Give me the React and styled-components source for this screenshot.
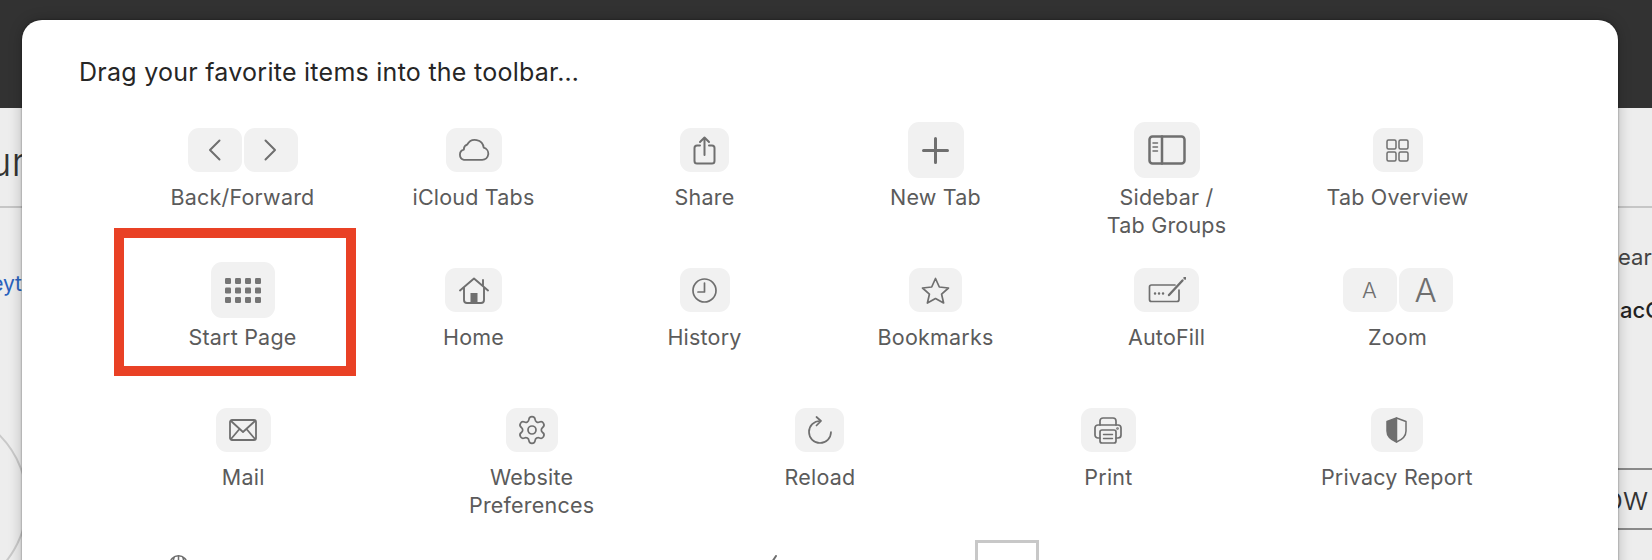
import styled, { createGlobalStyle } from "styled-components";
import { Settings } from "lucide-react";

const GlobalStyle = createGlobalStyle`
  html, body {
    margin: 0;
    padding: 0;
    overflow: hidden;
  }
  body {
    font-family: Inter, "Liberation Sans", sans-serif;
  }
`;

const Screen = styled.div`
  position: relative;
  width: 1652px;
  height: 560px;
  overflow: hidden;
  background: #323232;
`;

const Page = styled.div`
  display: flex;
  justify-content: space-between;
  height: 452px;
  margin-top: 108px;
  position: absolute;
  inset: 0;
  background: #ededed;
`;

const Edge = styled.div`
  width: ${(p) => p.$w}px;
  overflow: hidden;
  display: flex;
  flex-direction: column;
`;

const EdgeHeader = styled.div`
  flex: none;
  height: 98px;
  border-bottom: 2px solid #c6c6c6;
  display: flex;
  justify-content: flex-end;
  align-items: flex-end;
  white-space: nowrap;
`;

const PageTitle = styled.span`
  font-size: 40px;
  font-weight: 300;
  line-height: 40px;
  margin: 0 -4px 24px 0;
  color: #333;
`;

const LinkText = styled.div`
  display: flex;
  justify-content: flex-end;
  margin-top: 63px;
  font-size: 21px;
  line-height: 26px;
  color: #2a62bd;
  white-space: nowrap;
`;

const Avatar = styled.div`
  flex: none;
  width: 192px;
  height: 192px;
  margin: 109px 0 0 -164px;
  border: 2px solid #c9c9c9;
  border-radius: 50%;
  box-sizing: border-box;
`;

const SearchText = styled.div`
  margin-top: 36px;
  font-size: 22px;
  line-height: 26px;
  color: #444;
  white-space: nowrap;
`;

const AccountText = styled.div`
  margin: 27px 0 0 2px;
  font-size: 22px;
  font-weight: 500;
  line-height: 26px;
  color: #222;
  white-space: nowrap;
`;

const RowText = styled.div`
  flex: none;
  height: 58px;
  margin-top: ${(p) => p.$top}px;
  border-top: 2px solid #8a8a8a;
  border-bottom: 2px solid #8a8a8a;
  font-size: 32px;
  font-weight: 300;
  line-height: 58px;
  text-indent: -14px;
  color: #333;
  white-space: nowrap;
`;

const Sheet = styled.div`
  position: absolute;
  left: 22px;
  top: 20px;
  width: 1596px;
  height: 620px;
  box-sizing: border-box;
  padding-top: 37px;
  background: #fff;
  border-radius: 20px;
  box-shadow: 0 0 14px rgba(0, 0, 0, 0.24), 0 0 2px rgba(0, 0, 0, 0.5);
  overflow: hidden;
`;

const Title = styled.div`
  height: 30px;
  margin: 0 0 35px 57px;
  font-size: 25px;
  letter-spacing: 0.26px;
  line-height: 30px;
  color: #262626;
`;

const Row = styled.div`
  display: grid;
  grid-template-columns: repeat(${(p) => p.$cols}, ${(p) => p.$cell}px);
  justify-content: center;
  height: 140px;
`;

const LastRow = styled.div`
  display: grid;
  grid-template-columns: 130px 465px 130px 104px 130px;
  padding-left: 91px;
`;

const Item = styled.div`
  position: relative;
  display: flex;
  flex-direction: column;
  align-items: center;
  grid-column: ${(p) => p.$col || "auto"};
`;

const TileSlot = styled.div`
  display: flex;
  justify-content: center;
  align-items: center;
  gap: 2px;
  height: 56px;
`;

const Tile = styled.div`
  display: flex;
  justify-content: center;
  align-items: center;
  width: ${(p) => p.$w}px;
  height: ${(p) => p.$h || 44}px;
  background: #f1f1f1;
  border-radius: 11px;
`;

const Label = styled.div`
  margin-top: 5px;
  font-size: 21.5px;
  letter-spacing: 0.2px;
  line-height: 28px;
  text-align: center;
  color: #5b5b5b;
  white-space: pre-line;
`;

const Highlight = styled.div`
  position: absolute;
  left: -13px;
  top: -34px;
  width: 242px;
  height: 148px;
  box-sizing: border-box;
  border: 10px solid #e94125;
`;

const Glyph = styled.svg`
  display: block;
  flex: none;
  fill: none;
  stroke: #6f6f6f;
  stroke-width: 1.7;
  stroke-linecap: round;
  stroke-linejoin: round;
`;

const ZoomLetter = styled.span`
  font-size: ${(p) => p.$size}px;
  font-weight: 300;
  line-height: 1;
  color: #6f6f6f;
`;

const PartialGlyph = styled.div`
  margin-top: 13px;
`;

const DropBox = styled.div`
  width: 64px;
  height: 60px;
  margin-top: -2px;
  box-sizing: border-box;
  border: 3px solid #c8c8c8;
`;

function Icon({ w, h, sw, scale = 1, children }) {
  return (
    <Glyph width={w * scale} height={h * scale} viewBox={`0 0 ${w} ${h}`} style={sw ? { strokeWidth: sw } : undefined}>
      {children}
    </Glyph>
  );
}

const icons = {
  back: (
    <Icon w={13} h={22} sw={2}>
      <path d="M11.5 1.5 2 11l9.5 9.5" />
    </Icon>
  ),
  forward: (
    <Icon w={13} h={22} sw={2}>
      <path d="M1.5 1.5 11 11l-9.500 9.500" />
    </Icon>
  ),
  cloud: (
    <Icon w={32} h={22} scale={1.07}>
      <path d="M7.500 20.500H24.500a5.800 5.800 0 0 0 1.400-11.400 8.200 8.200 0 0 0-15.400-3A4.500 4.500 0 0 0 7.400 10.800 5 5 0 0 0 7.500 20.500Z" />
    </Icon>
  ),
  share: (
    <Icon w={23} h={29} sw={2}>
      <path d="M7 9.500H4A2.500 2.500 0 0 0 1.500 12v13A2.500 2.500 0 0 0 4 27.500h15a2.500 2.500 0 0 0 2.500-2.500V12A2.500 2.500 0 0 0 19 9.500h-3" />
      <path d="M11.500 19V1.500M7 6l4.500-4.500L16 6" />
    </Icon>
  ),
  plus: (
    <Icon w={27} h={27} sw={3}>
      <path d="M13.500 1.500v24M1.500 13.500h24" />
    </Icon>
  ),
  sidebar: (
    <Icon w={38} h={30} sw={2.5}>
      <rect x="1.500" y="1.500" width="35" height="27" rx="3" />
      <path d="M14 1.500v27" />
      <path d="M5 8h4.500M5 12h4.500M5 16h4.500" style={{ strokeWidth: 1.5 }} />
    </Icon>
  ),
  overview: (
    <Icon w={23} h={23} sw={1.5}>
      <rect x="1" y="1" width="9" height="9" rx="1.500" />
      <rect x="13" y="1" width="9" height="9" rx="1.500" />
      <rect x="1" y="13" width="9" height="9" rx="1.500" />
      <rect x="13" y="13" width="9" height="9" rx="1.500" />
    </Icon>
  ),
  start: (
    <Icon w={36} h={25} sw={0}>
      {[0, 9.5, 19].map((y) =>
        [0, 10, 20, 30].map((x) => (
          <rect key={`${x}-${y}`} x={x} y={y} width="6" height="6" rx="1.200" style={{ fill: "#757575", stroke: "none" }} />
        ))
      )}
    </Icon>
  ),
  home: (
    <Icon w={30} h={27} sw={1.9}>
      <path d="M1 13.500 15 1.500l14 12M24 3v6" />
      <path d="M5 11v12a3 3 0 0 0 3 3h14a3 3 0 0 0 3-3V11" />
      <rect x="11.500" y="16" width="7" height="10" style={{ fill: "#6f6f6f", stroke: "none" }} />
    </Icon>
  ),
  history: (
    <Icon w={25} h={25}>
      <circle cx="12.500" cy="12.500" r="11.500" />
      <path d="M12.500 5v9H6" />
    </Icon>
  ),
  star: (
    <Icon w={29} h={27}>
      <path d="M14.500 1.500 18.300 10l9.200 1-6.900 6.200 2 8.800-8.100-4.500L6.400 26l2-8.800L1.500 11l9.200-1Z" />
    </Icon>
  ),
  autofill: (
    <Icon w={38} h={26}>
      <path d="M27 8H3.500a2 2 0 0 0-2 2v12.500a2 2 0 0 0 2 2H29a2 2 0 0 0 2-2V13" />
      <path d="M21 18 34.500 3.500" style={{ strokeWidth: 2.400 }} />
      <circle cx="37" cy="1" r="0.800" />
      <path d="M7 16.500h.1M11 16.500h.1M15 16.500h.1" style={{ strokeWidth: 2.400 }} />
    </Icon>
  ),
  mail: (
    <Icon w={28} h={22} sw={1.8}>
      <rect x="1" y="1" width="26" height="20" rx="2" />
      <path d="M2 2l12 11L26 2M2 20l8.500-10M26 20l-8.500-10" />
    </Icon>
  ),
  gear: <Settings size={32} strokeWidth={1.3} color="#6f6f6f" />,
  reload: (
    <Icon w={24} h={28}>
      <path d="M12 5A11 11 0 1 0 23 16" />
      <path d="M8.500 1 13 5 8.500 9.500" />
    </Icon>
  ),
  print: (
    <Icon w={28} h={27}>
      <path d="M6 8V4a3 3 0 0 1 3-3h10a3 3 0 0 1 3 3v4" />
      <path d="M6 21H4a3 3 0 0 1-3-3v-7a3 3 0 0 1 3-3h20a3 3 0 0 1 3 3v7a3 3 0 0 1-3 3h-2" />
      <rect x="6" y="13" width="16" height="13" rx="2" />
      <path d="M9.500 17.500h9M9.500 21.500h9" style={{ strokeWidth: 1.400 }} />
      <circle cx="23.500" cy="11.500" r="0.500" />
    </Icon>
  ),
  shield: (
    <Icon w={21} h={26} sw={1.5}>
      <path d="M10.500 1 1 4.500V14c0 5.500 4.500 9 9.500 11Z" style={{ fill: "#6f6f6f" }} />
      <path d="M10.500 1 20 4.500V14c0 5.500-4.500 9-9.500 11" />
    </Icon>
  ),
};

const rowOne = [
  { label: "Back/Forward", pair: [icons.back, icons.forward], w: 54 },
  { label: "iCloud Tabs", icon: icons.cloud, w: 56 },
  { label: "Share", icon: icons.share, w: 49 },
  { label: "New Tab", icon: icons.plus, w: 56, h: 56 },
  { label: "Sidebar /\nTab Groups", icon: icons.sidebar, w: 66, h: 56 },
  { label: "Tab Overview", icon: icons.overview, w: 50 },
];

const rowTwo = [
  { label: "Start Page", icon: icons.start, w: 64, h: 56, marked: true },
  { label: "Home", icon: icons.home, w: 57 },
  { label: "History", icon: icons.history, w: 50 },
  { label: "Bookmarks", icon: icons.star, w: 53 },
  { label: "AutoFill", icon: icons.autofill, w: 65 },
  {
    label: "Zoom",
    pair: [<ZoomLetter $size={22}>A</ZoomLetter>, <ZoomLetter $size={33}>A</ZoomLetter>],
    w: 54,
  },
];

const rowThree = [
  { label: "Mail", icon: icons.mail, w: 55 },
  { label: "Website\nPreferences", icon: icons.gear, w: 52 },
  { label: "Reload", icon: icons.reload, w: 49 },
  { label: "Print", icon: icons.print, w: 55 },
  { label: "Privacy Report", icon: icons.shield, w: 52 },
];

function ToolbarItem({ item }) {
  return (
    <Item>
      <TileSlot>
        {item.pair ? (
          item.pair.map((glyph, i) => (
            <Tile key={i} $w={item.w}>
              {glyph}
            </Tile>
          ))
        ) : (
          <Tile $w={item.w} $h={item.h}>
            {item.icon}
          </Tile>
        )}
      </TileSlot>
      <Label>{item.label}</Label>
      {item.marked && <Highlight />}
    </Item>
  );
}

export default function App() {
  return (
    <>
      <GlobalStyle />
      <Screen>
        <Page>
          <Edge $w={22}>
            <EdgeHeader>
              <PageTitle>ur</PageTitle>
            </EdgeHeader>
            <LinkText>eyt</LinkText>
            <Avatar />
          </Edge>
          <Edge $w={34}>
            <EdgeHeader />
            <SearchText>earc</SearchText>
            <AccountText>acC</AccountText>
            <RowText $top={145}>ow</RowText>
          </Edge>
        </Page>
        <Sheet>
          <Title>Drag your favorite items into the toolbar…</Title>
          <Row $cols={6} $cell={231}>
            {rowOne.map((item) => (
              <ToolbarItem key={item.label} item={item} />
            ))}
          </Row>
          <Row $cols={6} $cell={231}>
            {rowTwo.map((item) => (
              <ToolbarItem key={item.label} item={item} />
            ))}
          </Row>
          <Row $cols={5} $cell={288.4}>
            {rowThree.map((item) => (
              <ToolbarItem key={item.label} item={item} />
            ))}
          </Row>
          <LastRow>
            <Item $col={1}>
              <PartialGlyph>
                <Icon w={19} h={19} sw={1.5}>
                  <circle cx="9.500" cy="9.500" r="8.700" />
                  <path d="M9.500 1v17M5 2.500C3.500 8 3.500 12 5 17M14 2.500c1.500 5.500 1.500 9.500 0 14.500M1.500 6h16" />
                </Icon>
              </PartialGlyph>
            </Item>
            <Item $col={3}>
              <PartialGlyph>
                <Icon w={10} h={19} sw={2}>
                  <path d="M8 1 2 10" />
                </Icon>
              </PartialGlyph>
            </Item>
            <Item $col={5}>
              <DropBox />
            </Item>
          </LastRow>
        </Sheet>
      </Screen>
    </>
  );
}
